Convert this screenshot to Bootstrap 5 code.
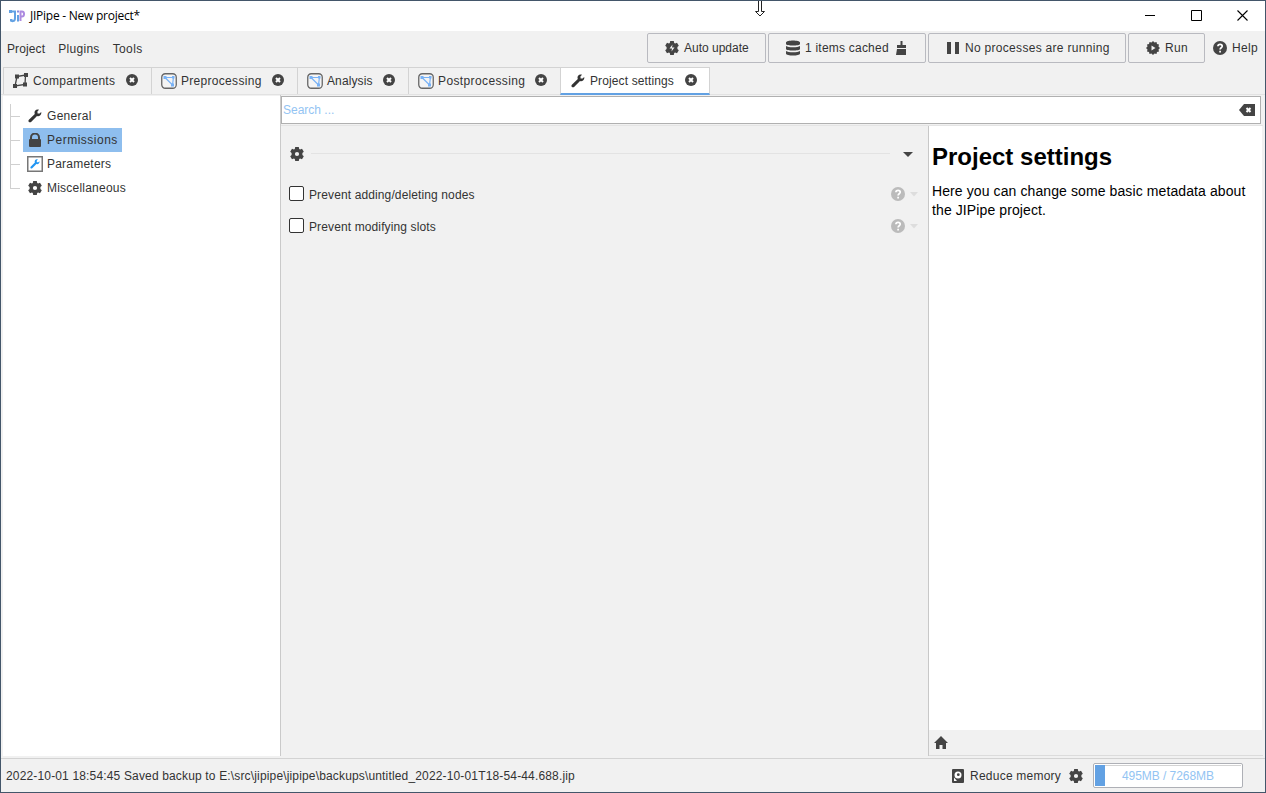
<!DOCTYPE html>
<html lang="en">
<head>
<meta charset="utf-8">
<title>JIPipe - New project*</title>
<link href="https://cdn.jsdelivr.net/npm/bootstrap@5.3.0/dist/css/bootstrap.min.css" rel="stylesheet">
<style>
:root{--pane:#f1f1f1;--line:#d3d3d3}
body{font:12px/16px "Liberation Sans",Arial,sans-serif;color:#333;letter-spacing:.3px;white-space:nowrap}
svg{display:block;flex:none}
.ls-0{letter-spacing:0}
.ls-1{letter-spacing:.12px}
.ls-2{letter-spacing:.22px}
.ls-4{letter-spacing:.38px}
.ls-5{letter-spacing:.5px}
.app{width:1266px;height:793px;border:1px solid #43566a;background:var(--pane)}
.titlebar{height:30px;color:#000;padding-left:8px}
.title-text{font:12px/16px "Open Sans","Noto Sans",sans-serif;letter-spacing:-.25px;margin-left:5px}
.win-btns{gap:35px;padding:0 17px 2px 0}
.menus{height:36px;padding:2px 0 0 6px}
.menu-labels{height:31px}
.menu-item{margin-right:13px}
.tool{height:30px;border:1px solid #b9bac0;border-radius:2px;background:var(--pane);margin-right:2px;padding-left:17px}
.tool-label{margin-left:5px}
.tabs{height:28px;padding-left:2px;border-bottom:1px solid #e2e2e2}
.tab-item{height:27px;border:1px solid var(--line);border-bottom:0;border-right:0;padding-left:9px}
.tab-item.current{background:#fff;border-right:1px solid var(--line);height:28px;border-bottom:2px solid #62a1e3;padding-left:10px}
.tab-label{margin-left:4px}
.tab-close{margin:0 13px 2px auto}
.work{height:663px;padding-left:2px}
.side{width:277px;height:661px;border-top:1px solid var(--pane);padding:8px 0 0 7px}
.tree{width:13px}
.tree i{display:block;height:24px;border-left:1px solid #d0d0d0;position:relative}
.tree i::after{content:"";position:absolute;left:0;top:12px;width:9px;border-top:1px solid #d0d0d0}
.tree i:last-child{height:13px}
.node{height:24px;padding:0 4px;gap:4px}
.node.sel{background:#8ebeee}
.main{width:983px;border-left:1px solid #cacaca;height:661px;padding-top:1px}
.search{width:980px;height:28px;border:1px solid #b0b0b0;background:#fff;padding:0 5px 0 1px;color:#93c4f3}
.split{border-top:1px solid #e4e4e4;margin-top:1px;height:631px}
.form-side{width:645px}
.group-head{height:24px;padding:0 13px 0 9px;margin-top:16px}
.rule{height:1px;background:#e3e3e3;margin:0 13px 2px 7px}
.opt{height:32px;padding:0 8px 0 8px}
.opt-label{padding-top:1px}
.box{width:15px;height:15px;border:1px solid #333;border-radius:2px;background:#fff;margin:0 5px 1px 0}
.help{width:335px;border-left:1px solid #c8c8c8;margin-left:2px}
.doc{height:604px;background:#fff;color:#000;padding:15px 3px;margin-right:1px;font-size:14px;line-height:19px;letter-spacing:.1px}
.doc h1{font-size:24px;font-weight:700;line-height:32px;margin:0 0 9px;letter-spacing:0}
.home{height:26px;border-bottom:1px solid #dcdcdc;padding-left:5px}
.status{height:34px;border-top:1px solid var(--line);padding:0 22px 0 5px}
.status-text{letter-spacing:.157px}
.mem{width:150px;height:25px;border:1px solid #aeb0b6;border-radius:2px;background:#fff;padding:1px;color:#93c4f3;margin-left:10px}
.mem::before{content:"";position:absolute;left:1px;right:1px;top:1px;border-top:1px solid #d3d3d3}
.mem .fill{height:21px;background:#62a1e3;position:relative}
.mem-text{left:0;top:4px;letter-spacing:-.05px}
.cursor{left:754px;top:0}
</style>
</head>
<body>
<svg class="d-none" aria-hidden="true">
<symbol id="gear" viewBox="0 0 14 14"><path fill-rule="evenodd" d="M5.2 0h3.6l.4 2 .9.5 1.9-.7 1.8 3-1.4 1.3v1.8l1.4 1.3-1.8 3-1.9-.7-.9.5-.4 2H5.2l-.4-2-.9-.5-1.9.7-1.8-3 1.4-1.3V6.100L.2 4.800l1.800-3 1.900.7.900-.5zM7 4.900a2.100 2.100 0 1 0 0 4.200 2.100 2.100 0 0 0 0-4.200z" fill="#444"/></symbol>
<symbol id="wrench" viewBox="0 0 14 14"><path d="M13.200 3 11.600 4.600 9.600 4.400 9.400 2.400 11 .8C9.500.2 8 .6 7.100 1.700 6.400 2.600 6.400 3.800 6.800 4.900L.9 10.700c-.6.6-.6 1.600 0 2.200s1.600.6 2.200 0l5.900-5.800c1.200.4 2.400.1 3.300-.8.9-.9 1.200-2.200.9-3.300z" fill="currentColor"/></symbol>
<symbol id="close" viewBox="0 0 12 12"><circle cx="6" cy="6" r="6" fill="#444"/><path d="m4 4 4 4m0-4L4 8" stroke="#fff" stroke-width="2"/></symbol>
<symbol id="graph" viewBox="0 0 16 16"><rect x=".75" y=".75" width="14.500" height="14.500" rx="3.500" fill="#f4f4f4" stroke="#666" stroke-width="1.300"/><path d="M4 4.500h8M4 4.500l7.500 7.500L12.500 4" fill="none" stroke="#78b2f6" stroke-width="1.200"/><path d="M2.500 3h3v3h-3zM11 3h2.500v2.500H11zM10 10.500h3v3h-3z" fill="#78b2f6"/></symbol>
<symbol id="help" viewBox="0 0 14 14"><circle cx="7" cy="7" r="7" fill="currentColor"/><path d="M4.900 5.300C5 2.600 9.200 2.700 9.200 5.200 9.200 6.700 7.100 6.800 7.100 8.500M7.100 9.700v1.800" fill="none" stroke="#fff" stroke-width="1.700"/></symbol>
</svg>
<div class="app d-flex flex-column position-relative">
  <header class="titlebar bg-white d-flex align-items-center">
    <svg width="16" height="15" viewBox="0 0 16 15" fill="none"><path d="M1 2.500h5V9c0 4-4 4-4 1M9 6v6.500" stroke="#62a1e3" stroke-width="2"/><path d="M11.500 12V2.500H13c2.700 0 2.700 5 0 5h-2" stroke="#ad8be0" stroke-width="2"/><path d="M8 2.500h2" stroke="#888be0" stroke-width="2"/><path d="M0 1h3v3H0zM1 10h2.500v2.500H1z" fill="#62a1e3"/></svg>
    <span class="title-text">JIPipe - New project*</span>
    <div class="win-btns d-flex align-items-center ms-auto">
      <svg width="11" height="11"><path d="M0 5.500h10" stroke="#000"/></svg>
      <svg width="11" height="11"><path d="M.5.500h10v10H.5z" fill="none" stroke="#000"/></svg>
      <svg width="11" height="11"><path d="m.5.500 10 10m0-10-10 10" stroke="#000" stroke-width="1.100"/></svg>
    </div>
  </header>
  <nav class="menus d-flex align-items-start">
    <div class="menu-labels d-flex align-items-center"><span class="menu-item ls-1">Project</span><span class="menu-item">Plugins</span><span class="menu-item ls-4">Tools</span></div>
    <div class="d-flex ms-auto">
      <div class="tool d-flex align-items-center" style="width:119px"><svg width="14" height="14"><use href="#gear"/><circle cx="7" cy="7" r="2.500" fill="#444"/><path d="m7.500 3.500-3 4H7L6.500 10.500 9.500 6.500H7z" fill="#f1f1f1"/></svg><span class="tool-label ls-0">Auto update</span></div>
      <div class="tool d-flex align-items-center" style="width:158px;padding-left:16px"><svg width="16" height="16"><path d="M1 2.500C1-.3 15-.3 15 2.500v1.500C15 6 1 6 1 4zM1 6c2 1.800 12 1.800 14 0v3c0 2-14 2-14 0zM1 11c2 1.800 12 1.800 14 0v2.500c0 2.800-14 2.800-14 0z" fill="#444"/></svg><span class="ms-1 ls-2" style="margin-right:7px">1 items cached</span><svg width="11" height="14"><path d="M4.500 0h2v4H10v3H1V4h3.500zM1 8h9v6H0z" fill="#444"/></svg></div>
      <div class="tool d-flex align-items-center" style="width:198px;padding-left:18px"><svg width="12" height="12"><path d="M0 0h4v12H0zM8 0h4v12H8z" fill="#444"/></svg><span style="margin-left:6px">No processes are running</span></div>
      <div class="tool d-flex align-items-center" style="width:77px"><svg width="14" height="14"><path d="m7 0 1.500 1.500 2-.5.500 2 2 .5-.5 2L14 7l-1.500 1.500.5 2-2 .5-.5 2-2-.5L7 14l-1.500-1.500-2 .5-.5-2-2-.5.500-2L0 7l1.500-1.500-.5-2 2-.5.500-2 2 .5z" fill="#444"/><path d="m5.500 4.500 4 2.500-4 2.500z" fill="#f1f1f1"/></svg><span class="tool-label">Run</span></div>
      <div class="d-flex align-items-center" style="width:58px;padding-left:6px"><svg width="14" height="14" color="#444"><use href="#help"/></svg><span style="margin-left:5px">Help</span></div>
    </div>
  </nav>
  <div class="tabs d-flex">
    <div class="tab-item d-flex align-items-center" style="width:148px"><svg width="16" height="16"><path d="M4 3.500 12.500 2 12 11.500 2 13z" fill="none" stroke="#444" stroke-width="1.300"/><path d="M2 1.500h4v4H2zM11 0h4v4h-4zM10 9.500h4v4h-4zM0 11h4v4H0z" fill="#444"/></svg><span class="tab-label">Compartments</span><svg class="tab-close" width="12" height="12"><use href="#close"/></svg></div>
    <div class="tab-item d-flex align-items-center" style="width:146px"><svg width="16" height="16"><use href="#graph"/></svg><span class="tab-label">Preprocessing</span><svg class="tab-close" width="12" height="12"><use href="#close"/></svg></div>
    <div class="tab-item d-flex align-items-center" style="width:111px"><svg width="16" height="16"><use href="#graph"/></svg><span class="tab-label ls-1">Analysis</span><svg class="tab-close" width="12" height="12"><use href="#close"/></svg></div>
    <div class="tab-item d-flex align-items-center" style="width:152px"><svg width="16" height="16"><use href="#graph"/></svg><span class="tab-label ls-4">Postprocessing</span><svg class="tab-close" width="12" height="12"><use href="#close"/></svg></div>
    <div class="tab-item current d-flex align-items-center" style="width:150px"><svg width="14" height="14"><use href="#wrench"/></svg><span class="tool-label ls-1">Project settings</span><svg class="tab-close" style="margin-right:12px" width="12" height="12"><use href="#close"/></svg></div>
  </div>
  <div class="work d-flex">
    <aside class="side bg-white d-flex align-items-start">
      <div class="tree"><i></i><i></i><i></i><i></i></div>
      <div class="d-flex flex-column align-items-start">
        <div class="node d-flex align-items-center"><svg width="16" height="14"><use href="#wrench" width="14" x="1"/></svg><span>General</span></div>
        <div class="node sel d-flex align-items-center"><svg width="16" height="14"><path d="M4 6V4.500a4 4 0 0 1 8 0V6" fill="none" stroke="#444" stroke-width="2"/><rect x="2" y="6" width="12" height="8" rx="1" fill="#444"/></svg><span class="ls-5">Permissions</span></div>
        <div class="node d-flex align-items-center"><svg width="16" height="16"><path d="M.75.750h14.500v14.500H.75z" fill="#fff" stroke="#777" stroke-width="1.500"/><use href="#wrench" x="3" y="3" width="10" height="10" color="#2196f3"/></svg><span class="ls-2">Parameters</span></div>
        <div class="node d-flex align-items-center"><svg width="16" height="14"><use href="#gear" x="1" width="14"/></svg><span class="ls-2">Miscellaneous</span></div>
      </div>
    </aside>
    <main class="main">
      <div class="search d-flex align-items-center justify-content-between"><span class="ls-0">Search ...</span><svg width="16" height="12"><path d="M5 0h11v12H5L0 6z" fill="#444"/><path d="m7.500 4 4 4m0-4-4 4" stroke="#fff" stroke-width="2"/></svg></div>
      <div class="split d-flex">
        <section class="form-side">
          <div class="group-head d-flex align-items-center"><svg width="14" height="14"><use href="#gear"/></svg><div class="rule flex-fill"></div><svg width="10" height="5"><path d="M0 0h10L5 5z" fill="#444"/></svg></div>
          <div class="opt d-flex align-items-center" style="margin-top:12px"><span class="box"></span><span class="opt-label ls-1">Prevent adding/deleting nodes</span><svg class="ms-auto" width="14" height="14" color="#bbb"><use href="#help"/></svg><svg style="margin-left:5px" width="8" height="5"><path d="M0 0h8L4 4.500z" fill="#ddd"/></svg></div>
          <div class="opt d-flex align-items-center"><span class="box"></span><span class="opt-label ls-1">Prevent modifying slots</span><svg class="ms-auto" width="14" height="14" color="#bbb"><use href="#help"/></svg><svg style="margin-left:5px" width="8" height="5"><path d="M0 0h8L4 4.500z" fill="#ddd"/></svg></div>
        </section>
        <section class="help">
          <div class="doc"><h1>Project settings</h1>Here you can change some basic metadata about<br>the JIPipe project.</div>
          <div class="home d-flex align-items-center"><svg width="14" height="13"><path d="M7 0 14 7h-2v6H8.500V9h-3v4H2V7H0z" fill="#444"/></svg></div>
        </section>
      </div>
    </main>
  </div>
  <footer class="status d-flex align-items-center">
    <span class="status-text">2022-10-01 18:54:45 Saved backup to E:\src\jipipe\jipipe\backups\untitled_2022-10-01T18-54-44.688.jip</span>
    <svg class="ms-auto" width="12" height="14"><rect width="12" height="14" rx="1" fill="#444"/><circle cx="6" cy="6" r="3.500" fill="#fff"/><circle cx="6.300" cy="5.700" r="1.400" fill="#444"/><path d="M2 8.500v3.500h3z" fill="#fff"/></svg>
    <span class="ls-2" style="margin:0 8px 0 6px">Reduce memory</span><svg width="14" height="14"><use href="#gear"/></svg>
    <div class="mem d-flex position-relative"><div class="fill" style="width:10px"></div><span class="mem-text position-absolute w-100 text-center">495MB / 7268MB</span></div>
  </footer>
  <svg class="cursor position-absolute" width="10" height="16"><path d="M3.500 0v10.500H.500L5 15l4.500-4.500h-3V0" fill="#fff" stroke="#222"/></svg>
</div>
<script src="https://cdn.jsdelivr.net/npm/bootstrap@5.3.0/dist/js/bootstrap.bundle.min.js"></script>
</body>
</html>
